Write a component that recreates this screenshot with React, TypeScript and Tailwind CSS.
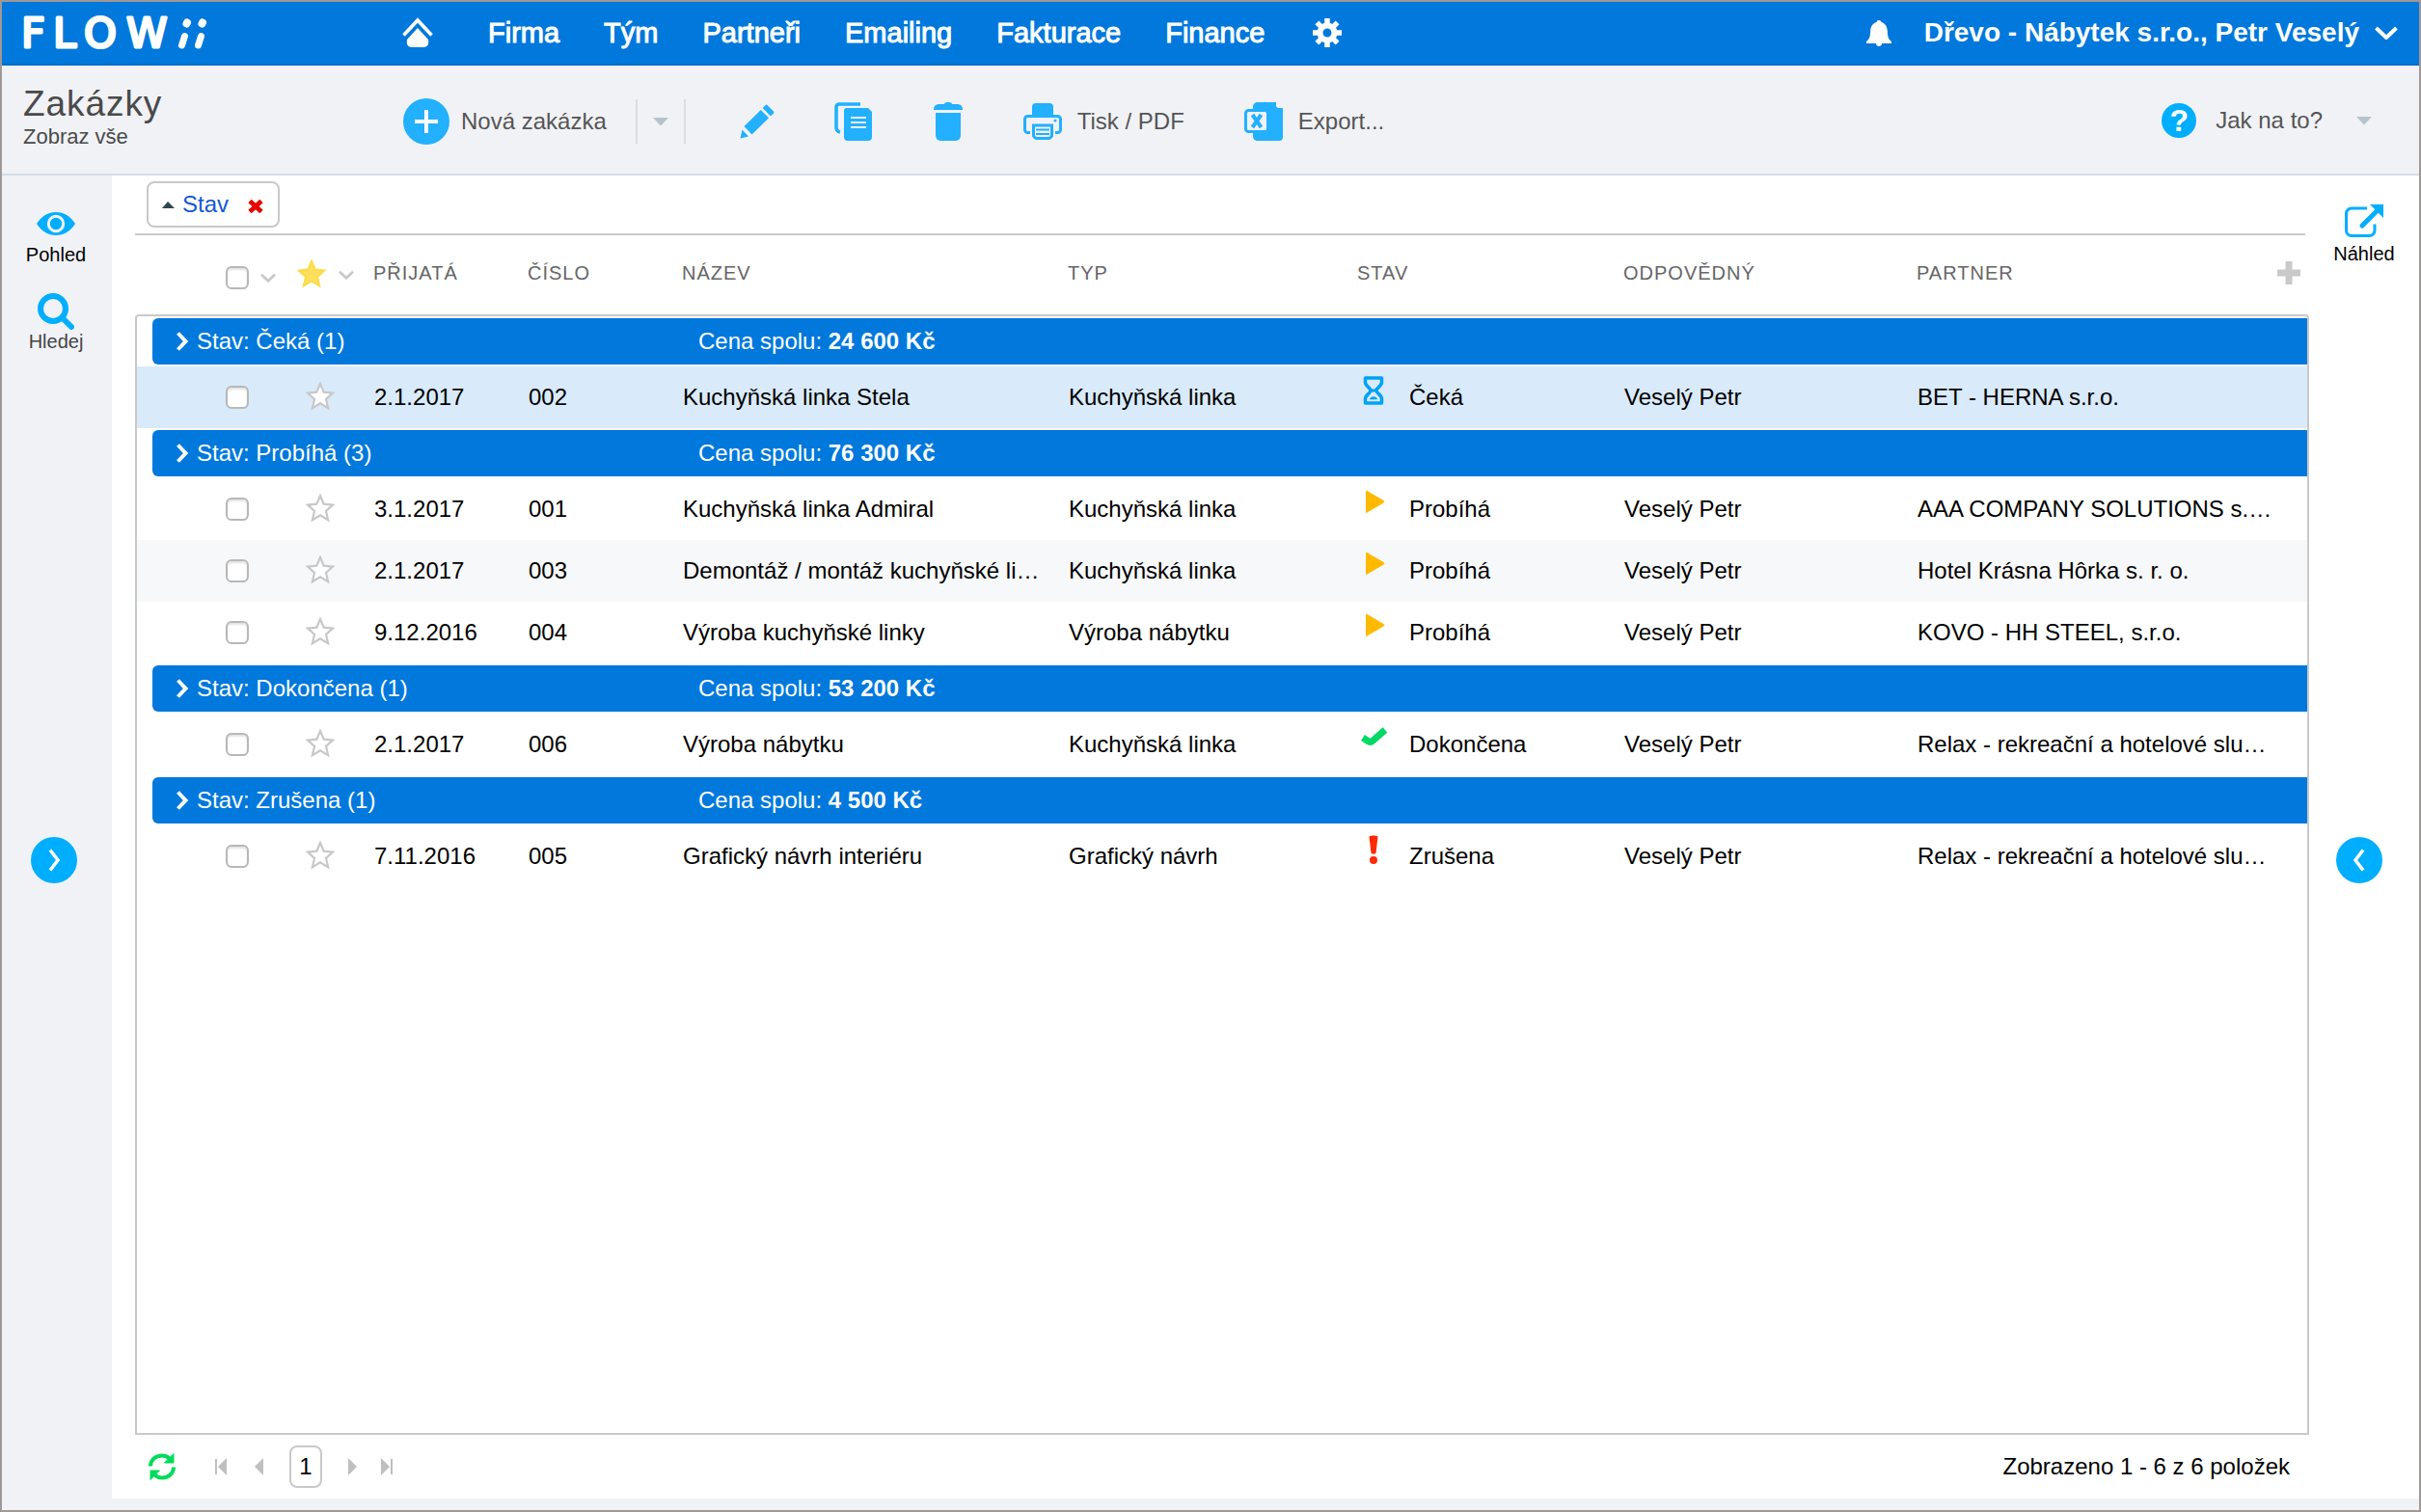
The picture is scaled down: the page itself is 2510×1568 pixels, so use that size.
import type { ReactNode } from "react";

type Status = "waiting" | "running" | "done" | "cancelled";

type Order = {
  date: string;
  number: string;
  name: string;
  type: string;
  owner: string;
  partner: string;
  selected?: boolean;
};

type Group = {
  status: Status;
  label: string;
  total: string;
  orders: Order[];
};

const navItems = ["Firma", "Tým", "Partneři", "Emailing", "Fakturace", "Finance"];

const groups: Group[] = [
  {
    status: "waiting",
    label: "Čeká",
    total: "24 600 Kč",
    orders: [
      { date: "2.1.2017", number: "002", name: "Kuchyňská linka Stela", type: "Kuchyňská linka", owner: "Veselý Petr", partner: "BET - HERNA s.r.o.", selected: true },
    ],
  },
  {
    status: "running",
    label: "Probíhá",
    total: "76 300 Kč",
    orders: [
      { date: "3.1.2017", number: "001", name: "Kuchyňská linka Admiral", type: "Kuchyňská linka", owner: "Veselý Petr", partner: "AAA COMPANY SOLUTIONS s.…" },
      { date: "2.1.2017", number: "003", name: "Demontáž / montáž kuchyňské li…", type: "Kuchyňská linka", owner: "Veselý Petr", partner: "Hotel Krásna Hôrka s. r. o." },
      { date: "9.12.2016", number: "004", name: "Výroba kuchyňské linky", type: "Výroba nábytku", owner: "Veselý Petr", partner: "KOVO - HH STEEL, s.r.o." },
    ],
  },
  {
    status: "done",
    label: "Dokončena",
    total: "53 200 Kč",
    orders: [
      { date: "2.1.2017", number: "006", name: "Výroba nábytku", type: "Kuchyňská linka", owner: "Veselý Petr", partner: "Relax - rekreační a hotelové slu…" },
    ],
  },
  {
    status: "cancelled",
    label: "Zrušena",
    total: "4 500 Kč",
    orders: [
      { date: "7.11.2016", number: "005", name: "Grafický návrh interiéru", type: "Grafický návrh", owner: "Veselý Petr", partner: "Relax - rekreační a hotelové slu…" },
    ],
  },
];

function Logo() {
  return (
    <svg width="202" height="60" viewBox="-4 -12 202 60" role="img" aria-label="FLOWii">
      <text
        x="-2 31 63 107"
        y="33"
        fill="#fff"
        stroke="#fff"
        strokeWidth="3"
        strokeLinejoin="round"
        className="font-['DejaVu_Sans'] text-[43px]"
      >
        FLOW
      </text>
      <g stroke="#fff" strokeWidth="7" strokeLinecap="round">
        <path d="M167.500 21.500 164.500 31M184.500 21.500 181.500 31" />
        <path d="M170 7.500 169.500 8.500M186 7.500 185.500 8.500" strokeWidth="8" />
      </g>
    </svg>
  );
}

function HomeIcon() {
  return (
    <svg width="34" height="32" viewBox="0 0 34 32" fill="none">
      <path d="M2.500 18.500 17 3l14.500 15.500" stroke="#fff" strokeWidth="3.600" />
      <path d="M17 11 28 23c1 5-1 8-5 8H11c-4 0-6-3-5-8z" fill="#fff" />
    </svg>
  );
}

function GearIcon() {
  return (
    <svg width="30" height="30" viewBox="0 0 30 30">
      <g fill="none" stroke="#fff">
        <circle cx="15" cy="15" r="7.500" strokeWidth="6" />
        <path
          d="M15 0v6M15 24v6M0 15h6M24 15h6M4.400 4.400l4.200 4.200M21.400 21.400l4.200 4.200M25.600 4.400l-4.200 4.200M8.600 21.400l-4.200 4.200"
          strokeWidth="5.500"
        />
      </g>
    </svg>
  );
}

function BellIcon() {
  return (
    <svg width="26" height="28" viewBox="0 0 26 28" fill="#fff">
      <path d="M13 1c1.500 0 2.300.8 2.500 2 4 1.200 6 4.500 6.300 9 .3 5.500.7 8.500 4.200 11v2H0v-2c3.500-2.500 3.900-5.500 4.200-11 .3-4.500 2.300-7.800 6.300-9 .2-1.200 1-2 2.500-2z" />
      <path d="M10 25h6c0 1.800-1.300 3-3 3s-3-1.200-3-3z" />
    </svg>
  );
}

function PlusCircleIcon() {
  return (
    <svg width="48" height="48" viewBox="0 0 48 48">
      <circle cx="24" cy="24" r="24" fill="#22b0ff" />
      <path d="M24 12v24M12 24h24" stroke="#fff" strokeWidth="4" />
    </svg>
  );
}

function PencilIcon() {
  return (
    <svg width="36" height="36" viewBox="0 0 36 36" fill="#22b0ff">
      <path d="M28.200.8 35 7.600a1.500 1.500 0 0 1 0 2L32 12.500 23.700 4l3-3a1.200 1.200 0 0 1 1.500-.2z" />
      <path d="m21.800 6 8.300 8.300L12.500 31.500l-8-8.500z" />
      <path d="m2.500 26.500 6.500 7L.5 35.500z" />
    </svg>
  );
}

function CopyIcon() {
  return (
    <svg width="40" height="40" viewBox="0 0 40 40">
      <path d="M27 2H5a3 3 0 0 0-3 3v22a5 5 0 0 0 4 4" fill="none" stroke="#22b0ff" strokeWidth="3.600" />
      <path d="M13 6h22l4 4v26a4 4 0 0 1-4 4H14a4 4 0 0 1-4-4V9a3 3 0 0 1 3-3z" fill="#22b0ff" />
      <path d="M17 16h16M17 21h16M17 26h16" stroke="#f1f2f6" strokeWidth="2" />
    </svg>
  );
}

function TrashIcon() {
  return (
    <svg width="32" height="40" viewBox="0 0 32 40" fill="#22b0ff">
      <path d="M12 2c0-2.600 8-2.600 8 0h5c4 0 6 2 6 6H1c0-4 2-6 6-6z" />
      <path d="M3 11h26v22c0 5-2 7-6 7H9c-4 0-6-2-6-7z" />
    </svg>
  );
}

function PrinterIcon() {
  return (
    <svg width="40" height="40" viewBox="0 0 40 40">
      <path d="M9 13V5a4 4 0 0 1 4-4h14a4 4 0 0 1 4 4v8z" fill="#22b0ff" />
      <rect x="1.500" y="14.500" width="37" height="17" rx="3" fill="#f1f2f6" stroke="#22b0ff" strokeWidth="3" />
      <circle cx="33" cy="19" r="1.500" fill="#22b0ff" />
      <path d="M8 22h24v12a4 4 0 0 1-4 4H12a4 4 0 0 1-4-4z" fill="#22b0ff" stroke="#f1f2f6" strokeWidth="2" />
      <path d="M10.500 24h19v9.500a4 4 0 0 1-4 4h-11a4 4 0 0 1-4-4z" fill="#f1f2f6" stroke="#22b0ff" strokeWidth="3" />
      <path d="M13 28.500h14M13 33h14" stroke="#22b0ff" strokeWidth="2" />
    </svg>
  );
}

function ExcelIcon() {
  return (
    <svg width="40" height="40" viewBox="0 0 40 40">
      <path d="M14 0h19v3c0 2 1 3 3 3h4v30a4 4 0 0 1-4 4H14c-3 0-5-2-5-5V5c0-3 2-5 5-5z" fill="#22b0ff" />
      <rect x="1.500" y="8.500" width="23" height="22" rx="3" fill="#f1f2f6" stroke="#22b0ff" strokeWidth="3" />
      <path d="m8.500 13 9 13M17.500 13l-9 13" stroke="#22b0ff" strokeWidth="4" />
    </svg>
  );
}

function HelpIcon() {
  return (
    <span className="flex size-9 items-center justify-center rounded-full bg-[#00aeff] text-[32px] leading-9 font-bold text-white">
      ?
    </span>
  );
}

function TriangleDown() {
  return (
    <svg width="18" height="10" viewBox="0 0 18 10">
      <path d="M1 1h16L9 9.500z" fill="#b5c3cc" />
    </svg>
  );
}

function ChevronDown({ color, size }: { color: string; size: number }) {
  return (
    <svg width={size} height={size / 2 + 2} viewBox="0 0 24 14" fill="none">
      <path d="M1.500 2 12 12 22.500 2" stroke={color} strokeWidth="4" />
    </svg>
  );
}

function EyeIcon() {
  return (
    <svg width="40" height="24" viewBox="0 0 40 24">
      <path d="M0 12C5 4 12 0 20 0s15 4 20 12c-5 8-12 12-20 12S5 20 0 12z" fill="#00aeff" />
      <circle cx="20" cy="12" r="7.700" fill="#00aeff" stroke="#f1f2f6" strokeWidth="3" />
    </svg>
  );
}

function SearchIcon() {
  return (
    <svg width="38" height="38" viewBox="0 0 38 38" fill="none" stroke="#00aeff">
      <circle cx="16" cy="16" r="13" strokeWidth="6" />
      <path d="m26 26 9 9" strokeWidth="6" strokeLinecap="round" />
    </svg>
  );
}

function PreviewIcon() {
  return (
    <svg width="40" height="36" viewBox="0 0 40 36" fill="none">
      <path
        d="M23 4H7A5.500 5.500 0 0 0 1.500 9.500v17.500A5.500 5.500 0 0 0 7 32.500h18.500A5.500 5.500 0 0 0 31 27v-6.500"
        stroke="#00aeff"
        strokeWidth="3"
      />
      <path d="M18 22 34 6" stroke="#00aeff" strokeWidth="5" strokeLinecap="round" />
      <path d="M26 0h14v14z" fill="#00aeff" />
    </svg>
  );
}

function StarIcon({ filled }: { filled?: boolean }) {
  return (
    <svg width="32" height="32" viewBox="0 1 32 32">
      <path
        d="m16 3 3.700 8.700 9.300.9-7 6.300 2.100 9.300L16 23.300l-8.100 4.900L10 18.900l-7-6.300 9.300-.9z"
        fill={filled ? "#ffe05e" : "#fff"}
        stroke={filled ? "#fddc4a" : "#c8c8c8"}
        strokeWidth="2.200"
      />
    </svg>
  );
}

function StatusIcon({ status }: { status: Status }) {
  return (
    <svg width="30" height="30" viewBox="0 0 30 30" className="mb-[14px] shrink-0">
      {status === "waiting" && (
        <g fill="none" stroke="#00a2f2">
          <path d="M6.500 2h17v4.500c0 4-5.500 5.500-5.500 8.500s5.500 4.500 5.500 8.500V28h-17v-4.500c0-4 5.500-5.500 5.500-8.500S6.500 10.500 6.500 6.500z" strokeWidth="3.500" strokeLinejoin="round" />
          <path d="M12 23.500c1-2 5-2 6 0z" strokeWidth="1.500" />
          <path d="M12 15h6" strokeWidth="3" />
        </g>
      )}
      {status === "running" && <path d="M7.500 3 25.500 13.500a1 1 0 0 1 0 1.500L7.500 25.500z" fill="#ffba00" stroke="#ffba00" strokeLinejoin="round" />}
      {status === "done" && <path d="m4 15 6 4c1.500.8 3 .3 4-.7L27 7" fill="none" stroke="#00d866" strokeWidth="7" strokeLinejoin="round" />}
      {status === "cancelled" && (
        <g fill="#ff2a00">
          <path d="M10.500 2c0-2 9-2 9 0l-2 16.500c-.3 1.500-4.700 1.500-5 0z" />
          <circle cx="15" cy="26" r="4" />
        </g>
      )}
    </svg>
  );
}

function RefreshIcon() {
  return (
    <svg width="28" height="28" viewBox="0 0 28 28">
      <g fill="none" stroke="#00dc5a" strokeWidth="4">
        <path d="M2 13.500C2 7 7.500 2.500 14 2.500c3 0 6 1.200 8 3.500" />
        <path d="M26 14.500C26 21 20.500 25.500 14 25.500c-3 0-6-1.200-8-3.500" />
      </g>
      <path d="M26 .5V10H16.500z" fill="#00dc5a" stroke="#00dc5a" />
      <path d="M2 27.500V18h9.500z" fill="#00dc5a" stroke="#00dc5a" />
    </svg>
  );
}

function PagerIcon({ back, edge }: { back?: boolean; edge?: boolean }) {
  return (
    <svg width="14" height="18" viewBox="0 0 14 18" fill="#bfbfbf" className={back ? "rotate-180" : ""}>
      <path d="M1 0 10 9 1 18z" />
      {edge && <path d="M11 1h2v16h-2z" />}
    </svg>
  );
}

function CheckBox({ label }: { label: string }) {
  return (
    <input
      type="checkbox"
      aria-label={label}
      className="block size-6 appearance-none rounded-md border-2 border-[#b8b8b8] bg-white shadow-[inset_0_2px_2px_#e4e4e4]"
    />
  );
}

function ToolButton({ icon, label, text }: { icon: ReactNode; label: string; text?: boolean }) {
  return (
    <button type="button" aria-label={label} className="flex items-center gap-4">
      {icon}
      {text && <span>{label}</span>}
    </button>
  );
}

function ToggleButton({ back }: { back?: boolean }) {
  return (
    <button
      type="button"
      aria-label={back ? "Zobrazit náhled" : "Zobrazit panel"}
      className="flex size-12 items-center justify-center rounded-full bg-[#00aeff]"
    >
      <svg width="14" height="24" viewBox="0 0 14 24" fill="none" className={back ? "rotate-180" : ""}>
        <path d="M3 1.500 11 12 3 22.500" stroke="#fff" strokeWidth="3.500" />
      </svg>
    </button>
  );
}

function Columns() {
  return (
    <colgroup>
      <col className="w-[158px]" />
      <col className="w-[88px]" />
      <col className="w-[160px]" />
      <col className="w-[160px]" />
      <col className="w-[400px]" />
      <col className="w-[300px]" />
      <col className="w-[276px]" />
      <col className="w-[304px]" />
      <col />
    </colgroup>
  );
}

function GroupRows({ group }: { group: Group }) {
  return (
    <tbody>
      <tr>
        <td colSpan={9} className="py-0.5 pl-4">
          <div className="flex h-12 items-center rounded-l-md bg-[#0078dc] pl-6 text-white">
            <button type="button" className="flex w-[542px] items-center gap-2">
              <svg width="14" height="20" viewBox="0 0 14 20" fill="none">
                <path d="m2.500 1.500 8 8.500-8 8.500" stroke="#fff" strokeWidth="4" />
              </svg>
              Stav: {group.label} ({group.orders.length})
            </button>
            <span>
              Cena spolu: <b>{group.total}</b>
            </span>
          </div>
        </td>
      </tr>
      {group.orders.map((order, i) => (
        <tr key={order.number} className={order.selected ? "h-16 bg-[#d9eafa]" : i % 2 ? "h-16 bg-[#f7f8fa]" : "h-16"}>
          <td className="pl-[92px]">
            <CheckBox label={`Vybrat zakázku ${order.number}`} />
          </td>
          <td className="pl-4">
            <button type="button" aria-label="Oblíbená" className="block">
              <StarIcon />
            </button>
          </td>
          <td>{order.date}</td>
          <td>{order.number}</td>
          <td>{order.name}</td>
          <td>{order.type}</td>
          <td>
            <div className="flex items-center gap-[22px] pl-px">
              <StatusIcon status={group.status} />
              {group.label}
            </div>
          </td>
          <td>{order.owner}</td>
          <td>{order.partner}</td>
        </tr>
      ))}
    </tbody>
  );
}

export default function App() {
  return (
    <div className="flex min-h-screen flex-col border-2 border-[#a09896] bg-[#f1f2f6] font-['Liberation_Sans',Arial,sans-serif] text-2xl leading-7 text-black">
      <header className="flex h-[66px] items-center border-b-2 border-[#006cc8] bg-[#0078dc] pr-[22px] pl-[18px] text-white">
        <a href="#" className="w-[396px]">
          <Logo />
        </a>
        <nav className="flex items-center text-[29px] leading-8 [-webkit-text-stroke:1px]">
          <a href="#" aria-label="Domů" className="mr-14">
            <HomeIcon />
          </a>
          <div className="flex items-center gap-[46px]">
            {navItems.map((item) => (
              <a key={item} href="#">
                {item}
              </a>
            ))}
            <a href="#" aria-label="Nastavení" className="pl-1">
              <GearIcon />
            </a>
          </div>
        </nav>
        <div className="ml-auto flex items-center">
          <button type="button" aria-label="Upozornění" className="mr-[34px]">
            <BellIcon />
          </button>
          <button type="button" className="flex items-center gap-4 text-[28px] leading-8 font-bold">
            Dřevo - Nábytek s.r.o., Petr Veselý
            <ChevronDown color="#fff" size={24} />
          </button>
        </div>
      </header>

      <div className="flex h-[114px] items-center border-b-2 border-[#d3dde8] px-[22px] text-[#555]">
        <div className="w-[394px] pb-1 text-[#4a4a4a]">
          <h1 className="text-[37px] leading-10 tracking-wide">Zakázky</h1>
          <p className="text-[22px] leading-7">Zobraz vše</p>
        </div>
        <div className="flex items-center pt-1">
          <button type="button" className="flex items-center gap-3">
            <PlusCircleIcon />
            Nová zakázka
          </button>
          <button type="button" aria-label="Další možnosti" className="ml-[30px] flex h-[46px] w-[52px] items-center justify-center border-x-2 border-[#dcdde0]">
            <TriangleDown />
          </button>
          <div className="ml-14 flex items-center gap-[62px]">
            <ToolButton icon={<PencilIcon />} label="Upravit" />
            <ToolButton icon={<CopyIcon />} label="Kopírovat" />
            <ToolButton icon={<TrashIcon />} label="Smazat" />
            <ToolButton icon={<PrinterIcon />} label="Tisk / PDF" text />
            <ToolButton icon={<ExcelIcon />} label="Export..." text />
          </div>
        </div>
        <button type="button" className="ml-auto flex items-center pt-0.5 pr-[26px]">
          <HelpIcon />
          <span className="mr-[34px] ml-5">Jak na to?</span>
          <TriangleDown />
        </button>
      </div>

      <div className="flex flex-1 pb-3">
        <aside className="flex w-[114px] shrink-0 flex-col items-center pr-0.5 text-xl leading-6">
          <div className="flex flex-1 basis-0 flex-col items-center">
            <button type="button" className="mt-[38px] flex flex-col items-center gap-2">
              <EyeIcon />
              Pohled
            </button>
            <button type="button" className="mt-7 flex flex-col items-center text-[#444]">
              <SearchIcon />
              Hledej
            </button>
          </div>
          <div className="flex-1 basis-0 pr-1">
            <ToggleButton />
          </div>
        </aside>

        <div className="flex flex-1 bg-white">
          <main className="flex flex-1 flex-col pl-6">
            <div className="mr-1 border-b-2 border-[#c9c9c9] py-1.5 pl-3">
              <div className="flex h-12 w-[138px] items-center rounded-lg border-2 border-[#c9c9c9] pl-3.5">
                <button type="button" className="flex items-center gap-2 text-[#1357d6]">
                  <svg width="13" height="7" viewBox="0 0 13 7">
                    <path d="M6 0 13 7H0z" fill="#2f4650" />
                  </svg>
                  Stav
                </button>
                <button type="button" aria-label="Odebrat seskupení" className="ml-5 pt-1">
                  <svg width="16" height="16" viewBox="0 0 16 16">
                    <path d="m2 2.500 12 11M14 2.500l-12 11" stroke="#e60000" strokeWidth="5" />
                  </svg>
                </button>
              </div>
            </div>

            <table className="w-full table-fixed border-x-2 border-transparent text-left">
              <Columns />
              <thead>
                <tr className="h-[82px] text-xl tracking-[1px] text-[#666] uppercase">
                  <th scope="col" className="pt-1.5 pl-[92px]">
                    <div className="flex items-center gap-3">
                      <CheckBox label="Vybrat vše" />
                      <ChevronDown color="#c8c8c8" size={16} />
                    </div>
                  </th>
                  <th scope="col" className="pl-2">
                    <div className="flex items-center gap-3">
                      <StarIcon filled />
                      <ChevronDown color="#c8c8c8" size={16} />
                    </div>
                  </th>
                  <th scope="col" className="pb-1 font-normal">Přijatá</th>
                  <th scope="col" className="pb-1 font-normal">Číslo</th>
                  <th scope="col" className="pb-1 font-normal">Název</th>
                  <th scope="col" className="pb-1 font-normal">Typ</th>
                  <th scope="col" className="pb-1 font-normal">Stav</th>
                  <th scope="col" className="pb-1 font-normal">Odpovědný</th>
                  <th scope="col" className="pr-1.5 pb-1 font-normal">
                    <div className="flex items-center justify-between">
                      Partner
                      <button type="button" aria-label="Přidat sloupec">
                        <svg width="26" height="26" viewBox="0 0 26 26">
                          <path d="M13 1v24M1 13h24" stroke="#c9c9c9" strokeWidth="7" />
                        </svg>
                      </button>
                    </div>
                  </th>
                </tr>
              </thead>
            </table>

            <div className="flex-1 rounded-t-sm border-2 border-[#c9c9c9]">
              <table className="w-full table-fixed whitespace-nowrap">
                <Columns />
                {groups.map((group) => (
                  <GroupRows key={group.status} group={group} />
                ))}
              </table>
            </div>

            <footer className="flex h-[66px] items-center pr-5 pl-3.5">
              <button type="button" aria-label="Obnovit">
                <RefreshIcon />
              </button>
              <div className="ml-10 flex items-center">
                <button type="button" aria-label="První strana">
                  <PagerIcon back edge />
                </button>
                <button type="button" aria-label="Předchozí strana" className="ml-6">
                  <PagerIcon back />
                </button>
                <button type="button" className="mx-[26px] flex h-11 w-[34px] items-center justify-center rounded-lg border-2 border-[#c9c9c9]">
                  1
                </button>
                <button type="button" aria-label="Další strana">
                  <PagerIcon />
                </button>
                <button type="button" aria-label="Poslední strana" className="ml-5">
                  <PagerIcon edge />
                </button>
              </div>
              <p className="ml-auto">Zobrazeno 1 - 6 z 6 položek</p>
            </footer>
          </main>

          <aside className="flex w-[114px] shrink-0 flex-col items-center text-xl leading-6">
            <div className="flex-1 basis-0">
              <button type="button" className="mt-[30px] flex flex-col items-center gap-[3px]">
                <PreviewIcon />
                Náhled
              </button>
            </div>
            <div className="flex-1 basis-0 pr-2.5">
              <ToggleButton back />
            </div>
          </aside>
        </div>
      </div>
    </div>
  );
}
